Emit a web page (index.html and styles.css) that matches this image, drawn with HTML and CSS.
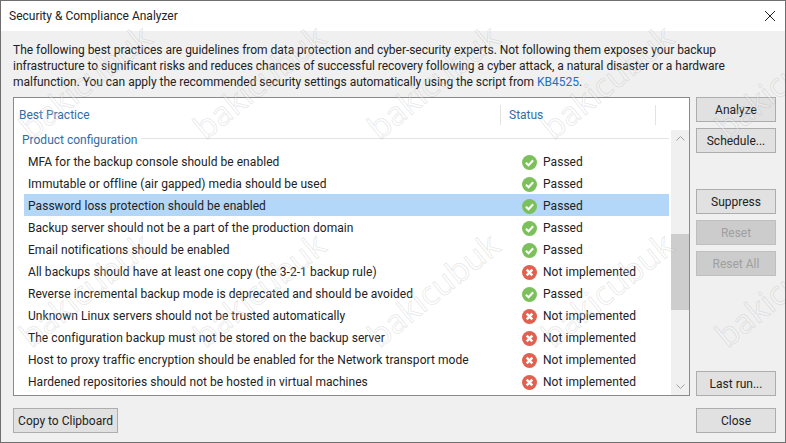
FILE: index.html
```html
<!DOCTYPE html>
<html lang="en">
<head>
    <meta charset="UTF-8">
    <meta name="viewport" content="width=device-width, initial-scale=1.0">
    <title>Security &amp; Compliance Analyzer</title>
    <link rel="stylesheet" href="styles.css">
</head>
<body>
    <svg class="icon-defs" width="0" height="0">
        <symbol id="icon-pass" viewBox="0 0 16 16">
            <circle cx="8" cy="8" r="8" fill="#7cc05c"/>
            <path d="M4.2 8.2 7 11l4.9-5.4" fill="none" stroke="#fff" stroke-width="2.2"/>
        </symbol>
        <symbol id="icon-fail" viewBox="0 0 16 16">
            <circle cx="8" cy="8" r="8" fill="#e2604f"/>
            <path d="M5 5l6 6M11 5l-6 6" fill="none" stroke="#fff" stroke-width="2.6"/>
        </symbol>
    </svg>

    <div class="window">
        <div class="titlebar">
            <span class="title">Security &amp; Compliance Analyzer</span>
            <svg class="close-x" width="12" height="12" viewBox="0 0 12 12">
                <path d="M1 1l10 10M11 1L1 11" fill="none" stroke="#222" stroke-width="1"/>
            </svg>
        </div>

        <div class="content">
            <p class="intro">The following best practices are guidelines from data protection and cyber-security experts. Not following them exposes your backup infrastructure to significant risks and reduces chances of successful recovery following a cyber attack, a natural disaster or a hardware malfunction. You can apply the recommended security settings automatically using the script from <a class="link" href="#">KB4525</a>.</p>

            <div class="main">
                <div class="panel">
                    <div class="table-area">
                        <div class="table-head">
                            <span class="head-cell head-practice">Best Practice</span>
                            <span class="head-cell head-status">Status</span>
                        </div>
                        <div class="group-row"><span>Product configuration</span></div>
                        <div class="row"><span>MFA for the backup console should be enabled</span><span class="status"><svg class="status-icon"><use href="#icon-pass"/></svg>Passed</span></div>
                        <div class="row"><span>Immutable or offline (air gapped) media should be used</span><span class="status"><svg class="status-icon"><use href="#icon-pass"/></svg>Passed</span></div>
                        <div class="row selected"><span>Password loss protection should be enabled</span><span class="status"><svg class="status-icon"><use href="#icon-pass"/></svg>Passed</span></div>
                        <div class="row"><span>Backup server should not be a part of the production domain</span><span class="status"><svg class="status-icon"><use href="#icon-pass"/></svg>Passed</span></div>
                        <div class="row"><span>Email notifications should be enabled</span><span class="status"><svg class="status-icon"><use href="#icon-pass"/></svg>Passed</span></div>
                        <div class="row"><span>All backups should have at least one copy (the 3-2-1 backup rule)</span><span class="status"><svg class="status-icon"><use href="#icon-fail"/></svg>Not implemented</span></div>
                        <div class="row"><span>Reverse incremental backup mode is deprecated and should be avoided</span><span class="status"><svg class="status-icon"><use href="#icon-pass"/></svg>Passed</span></div>
                        <div class="row"><span>Unknown Linux servers should not be trusted automatically</span><span class="status"><svg class="status-icon"><use href="#icon-fail"/></svg>Not implemented</span></div>
                        <div class="row"><span>The configuration backup must not be stored on the backup server</span><span class="status"><svg class="status-icon"><use href="#icon-fail"/></svg>Not implemented</span></div>
                        <div class="row"><span>Host to proxy traffic encryption should be enabled for the Network transport mode</span><span class="status"><svg class="status-icon"><use href="#icon-fail"/></svg>Not implemented</span></div>
                        <div class="row"><span>Hardened repositories should not be hosted in virtual machines</span><span class="status"><svg class="status-icon"><use href="#icon-fail"/></svg>Not implemented</span></div>
                    </div>
                    <div class="scrollbar">
                        <svg class="arrow" width="9" height="5" viewBox="0 0 9 5"><path d="M.5 4.5l4-4 4 4" fill="none" stroke="#a0a0a0"/></svg>
                        <div class="scroll-track"><div class="scroll-thumb"></div></div>
                        <svg class="arrow" width="9" height="5" viewBox="0 0 9 5"><path d="M.5.5l4 4 4-4" fill="none" stroke="#a0a0a0"/></svg>
                    </div>
                </div>

                <div class="side">
                    <div class="btn-group">
                        <button class="btn">Analyze</button>
                        <button class="btn">Schedule...</button>
                    </div>
                    <div class="btn-group">
                        <button class="btn">Suppress</button>
                        <button class="btn" disabled>Reset</button>
                        <button class="btn" disabled>Reset All</button>
                    </div>
                    <button class="btn last-run">Last run...</button>
                </div>
            </div>

            <div class="footer">
                <button class="btn btn-copy">Copy to Clipboard</button>
                <button class="btn">Close</button>
            </div>
        </div>

        <!-- watermark over the whole dialog -->
        <div class="watermarks" aria-hidden="true">
            <span class="wm">bakicubuk</span>
            <span class="wm">bakicubuk</span>
            <span class="wm">bakicubuk</span>
            <span class="wm">bakicubuk</span>
            <span class="wm">bakicubuk</span>
            <span class="wm">bakicubuk</span>
            <span class="wm">bakicubuk</span>
            <span class="wm">bakicubuk</span>
            <span class="wm">bakicubuk</span>
            <span class="wm">bakicubuk</span>
        </div>
    </div>
</body>
</html>
```

FILE: styles.css
```css
* {
    margin: 0;
    padding: 0;
    box-sizing: border-box;
}

body {
    font-family: Roboto, 'Open Sans', sans-serif;
    font-size: 12px;
    color: #222;
    background-color: #f0f0f0;
    overflow: hidden;
}

.icon-defs {
    position: absolute;
}

.window {
    position: relative;
    width: 786px;
    height: 443px;
    border: 1px solid #6f6f6f;
    display: flex;
    flex-direction: column;
    overflow: hidden;
}

.titlebar {
    height: 30px;
    background-color: #fff;
    display: flex;
    align-items: center;
    justify-content: space-between;
    padding: 0 9px 0 8px;
    flex-shrink: 0;
}

.content {
    flex: 1;
    display: flex;
    flex-direction: column;
    padding: 10px 9px 8px 12px;
}

.intro {
    padding-top: 1px;
    line-height: 16px;
    height: 56px;
    letter-spacing: -0.03px;
}

.link {
    color: #1a6fc9;
    text-decoration: none;
}

.main {
    display: flex;
    gap: 6px;
    height: 299px;
}

.panel {
    width: 677px;
    border: 1px solid #8a8a8a;
    background-color: #fff;
    display: flex;
}

.table-area {
    flex: 1;
    padding: 0 2px 0 10px;
}

.table-head {
    display: flex;
    height: 32px;
    padding-top: 2px;
    align-items: center;
    color: #2f6da8;
}

.head-cell {
    height: 20px;
    line-height: 20px;
}

.head-practice {
    width: 482px;
    margin-left: -5px;
    border-right: 1px solid #e3e3e3;
}

.head-status {
    width: 155px;
    padding-left: 8px;
    border-right: 1px solid #e3e3e3;
}

.group-row {
    height: 20px;
    line-height: 20px;
    color: #2f6da8;
    display: flex;
    align-items: center;
    gap: 4px;
    margin-left: -2px;
}

.group-row::after {
    content: "";
    flex: 1;
    height: 1px;
    margin-bottom: 4px;
    background-color: #e3e3e3;
}

.row {
    display: flex;
    justify-content: space-between;
    height: 22px;
    padding: 2px 0 0 4px;
    line-height: 20px;
    letter-spacing: 0.05px;
}

.row.selected {
    background-color: #b3d7f9;
}

.status {
    width: 171px;
    display: flex;
    align-items: center;
    gap: 6px;
    padding-left: 24px;
    flex-shrink: 0;
}

.status-icon {
    width: 15px;
    height: 15px;
    flex-shrink: 0;
}

.scrollbar {
    width: 18px;
    margin-top: 32px;
    background-color: #f0f0f0;
    display: flex;
    flex-direction: column;
    align-items: center;
}

.arrow {
    margin: 6px 0;
    flex-shrink: 0;
}

.scroll-track {
    flex: 1;
    width: 100%;
    padding-top: 87px;
}

.scroll-thumb {
    height: 76px;
    background-color: #cdcdcd;
}

.side {
    flex: 1;
    display: flex;
    flex-direction: column;
    gap: 36px;
}

.btn-group {
    display: flex;
    flex-direction: column;
    gap: 6px;
}

.btn {
    width: 80px;
    height: 25px;
    font-family: inherit;
    font-size: 12px;
    color: #222;
    background-color: #e1e1e1;
    border: 1px solid #adadad;
}

.btn:disabled {
    color: #9f9f9f;
    background-color: #cccccc;
    border-color: #bfbfbf;
}

.last-run {
    margin-top: auto;
}

.footer {
    display: flex;
    justify-content: space-between;
    margin-top: 12px;
}

.btn-copy {
    width: 105px;
}

.watermarks {
    position: absolute;
    top: -24px;
    left: -3px;
    display: grid;
    grid-template-columns: repeat(5, 174px);
    grid-template-rows: repeat(2, 208px);
    place-items: center;
    pointer-events: none;
}

.wm {
    font-family: 'Open Sans', sans-serif;
    font-size: 33px;
    white-space: nowrap;
    color: rgba(255, 255, 255, 0.25);
    -webkit-text-stroke: 1px rgba(110, 110, 110, 0.15);
    transform: rotate(-39deg);
}
```
